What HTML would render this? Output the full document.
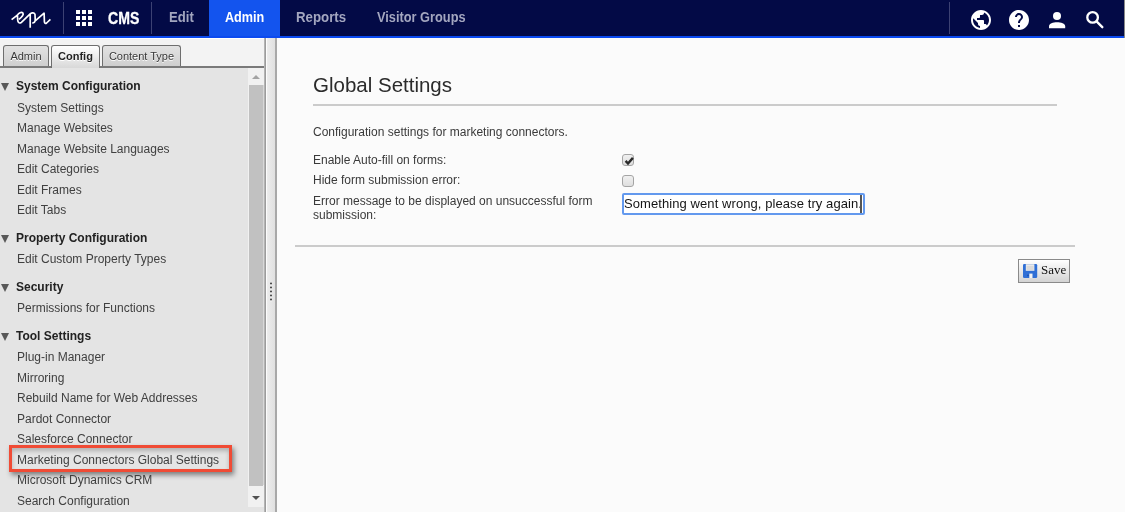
<!DOCTYPE html>
<html><head><meta charset="utf-8">
<style>
*{margin:0;padding:0;box-sizing:border-box}
html,body{width:1125px;height:512px;overflow:hidden;background:#fbfbfb;font-family:"Liberation Sans",sans-serif;position:relative}
.a{position:absolute;white-space:nowrap}
#hdr{position:absolute;left:0;top:0;width:1125px;height:36px;background:#030a46}
#hbar{position:absolute;left:0;top:36px;width:1125px;height:2px;background:#0b4af0}
.sep{position:absolute;top:2px;width:1px;height:32px;background:#3c4173}
.nav{position:absolute;top:0;height:36px;font-weight:bold;font-size:15.5px;line-height:34px;color:#a3a6bf}
.nav span{display:inline-block;transform:scaleX(.815);transform-origin:0 50%}
#admin{background:#1354ee;color:#fff}
#left{position:absolute;left:0;top:38px;width:265px;height:474px;background:#e4e4e4}
#strip{position:absolute;left:0;top:0;width:265px;height:30px;background:#f3f3f3;border-top:1px solid #fff;border-bottom:2px solid #7a7a7a}
.tab{position:absolute;top:6px;height:21px;border:1px solid #6e6e6e;border-bottom:none;border-radius:3px 3px 0 0;font-size:11px;line-height:20px;text-align:center;color:#383838;background:linear-gradient(#e2e2e2,#cfcfcf);text-shadow:0 1px 0 #fff}
.tab.on{background:linear-gradient(#fff,#d8d8d8);font-weight:bold;color:#222;height:23px}
.tree{position:absolute;left:0;font-size:12px;color:#404040;line-height:14px}
.h{font-weight:bold;color:#222;left:16px}
.i{left:17px}
.tri{position:absolute;left:1px;width:0;height:0;border-left:4.5px solid transparent;border-right:4.5px solid transparent;border-top:8px solid #585858}
#sb{position:absolute;left:248px;top:30px;width:16px;height:439px;background:#f1f1f1}
#thumb{position:absolute;left:1px;top:17px;width:14px;height:401px;background:#c1c1c1}
#split{position:absolute;left:265px;top:38px;width:12px;height:474px;background:linear-gradient(90deg,#9c9c9c 0,#9c9c9c 1px,#fcfcfc 1px,#fcfcfc 2px,#ececec 2px,#e0e0e0 10px,#a8a8a8 10px,#a8a8a8 12px)}
.dot{position:absolute;left:5px;width:2px;height:2px;background:#3c3c3c;border-radius:1px;box-shadow:0 1px 0 rgba(255,255,255,.8);transform:translateY(.5px)}
.ct{position:absolute;font-size:12px;color:#3a3a3a;line-height:14px}
</style></head><body><div style="position:absolute;left:0;top:0;width:1125px;height:512px;will-change:transform">
<div id="hdr">
  <svg class="a" style="left:8px;top:8px" width="48" height="24" viewBox="0 0 48 24">
    <path d="M3.6,11.7 L9.4,7.1 C10.8,4.9 13.4,3.7 14.9,5 C16.1,6.2 14,9 11,11.3 M9.4,7.1 C9.6,9.5 9.5,12 10,13.6 C10.5,15.2 12.2,15.4 13.4,14.3 L22.4,5.6 M22.2,5.8 L22.2,19.7 M22.4,5.6 C23.8,4.4 26.6,4.4 27,6.4 L27.2,11.2 C27.3,14 26.2,15 24.2,15 M26.6,13.4 L36.1,5.2 L36.4,13.8 C36.5,15.5 37.6,15.8 38.6,15 L42.4,11.4" fill="none" stroke="#fff" stroke-width="1.7" stroke-linecap="butt" stroke-linejoin="round"/>
  </svg>
  <div class="sep" style="left:63px"></div>
  <svg class="a" style="left:76px;top:10px" width="16" height="16" viewBox="0 0 16 16" fill="#fff">
    <rect x="0" y="0" width="4" height="4"/><rect x="6" y="0" width="4" height="4"/><rect x="12" y="0" width="4" height="4"/>
    <rect x="0" y="6" width="4" height="4"/><rect x="6" y="6" width="4" height="4"/><rect x="12" y="6" width="4" height="4"/>
    <rect x="0" y="12" width="4" height="4"/><rect x="6" y="12" width="4" height="4"/><rect x="12" y="12" width="4" height="4"/>
  </svg>
  <div class="nav" style="left:108px;top:2px;color:#fff;font-size:16px;-webkit-text-stroke:.3px #fff"><span style="transform:scaleX(.88)">CMS</span></div>
  <div class="sep" style="left:151px"></div>
  <div class="nav" style="left:152px;width:57px;padding-left:16.5px"><span style="transform:scaleX(.845)">Edit</span></div>
  <div class="nav" id="admin" style="left:209px;width:71px;padding-left:16px"><span>Admin</span></div>
  <div class="nav" style="left:280px;padding-left:16px"><span style="transform:scaleX(.855)">Reports</span></div>
  <div class="nav" style="left:361px;padding-left:16px"><span style="transform:scaleX(.825)">Visitor Groups</span></div>
  <div class="sep" style="left:949px"></div>
  <svg class="a" style="left:969px;top:8px" width="24" height="24" viewBox="0 0 24 24" fill="#fff"><path d="M12 2C6.48 2 2 6.48 2 12s4.48 10 10 10 10-4.48 10-10S17.52 2 12 2zm-1 17.930c-3.950-.49-7-3.850-7-7.930 0-.62.08-1.210.21-1.790L9 15v1c0 1.100.9 2 2 2v1.930zm6.900-2.540c-.26-.81-1-1.390-1.900-1.390h-1v-3c0-.55-.45-1-1-1H8v-2h2c.55 0 1-.45 1-1V7h2c1.100 0 2-.9 2-2v-.41c2.930 1.190 5 4.060 5 7.410 0 2.080-.8 3.970-2.100 5.390z"/></svg>
  <svg class="a" style="left:1007px;top:8px" width="24" height="24" viewBox="0 0 24 24" fill="#fff"><path d="M12 2C6.48 2 2 6.48 2 12s4.48 10 10 10 10-4.480 10-10S17.520 2 12 2zm1 17h-2v-2h2v2zm2.070-7.750l-.9.920C13.450 12.900 13 13.500 13 15h-2v-.5c0-1.100.45-2.100 1.170-2.830l1.240-1.260c.37-.36.59-.86.59-1.410 0-1.100-.9-2-2-2s-2 .9-2 2H8c0-2.210 1.790-4 4-4s4 1.790 4 4c0 .88-.36 1.680-.93 2.250z"/></svg>
  <svg class="a" style="left:1040px;top:0" width="80" height="36" viewBox="1040 0 80 36">
    <circle cx="1057" cy="16" r="4" fill="#fff"/>
    <path d="M1049,28.2 L1049,26.2 C1049,23.5 1053,22.3 1057,22.3 C1061,22.3 1065.2,23.5 1065.2,26.2 L1065.2,28.2 Z" fill="#fff"/>
    <circle cx="1092.6" cy="17.4" r="5.3" fill="none" stroke="#fff" stroke-width="2.3"/>
    <path d="M1096.8,21.7 L1102.3,27.2" stroke="#fff" stroke-width="2.4" stroke-linecap="round"/>
  </svg>
  </div>
<div id="hbar"></div>
<div class="a" style="left:1124px;top:0;width:1px;height:38px;background:#888"></div>

<div id="left">
  <div id="strip">
    <div class="tab" style="left:3px;width:46px">Admin</div>
    <div class="tab on" style="left:51px;width:49px">Config</div>
    <div class="tab" style="left:102px;width:79px">Content Type</div>
  </div>
  <div class="tri" style="top:45px"></div>
  <div class="tree h a" style="top:41px">System Configuration</div>
  <div class="tree i a" style="top:63px">System Settings</div>
  <div class="tree i a" style="top:83px">Manage Websites</div>
  <div class="tree i a" style="top:104px">Manage Website Languages</div>
  <div class="tree i a" style="top:124px">Edit Categories</div>
  <div class="tree i a" style="top:145px">Edit Frames</div>
  <div class="tree i a" style="top:165px">Edit Tabs</div>
  <div class="tri" style="top:197px"></div>
  <div class="tree h a" style="top:193px">Property Configuration</div>
  <div class="tree i a" style="top:214px">Edit Custom Property Types</div>
  <div class="tri" style="top:246px"></div>
  <div class="tree h a" style="top:242px">Security</div>
  <div class="tree i a" style="top:263px">Permissions for Functions</div>
  <div class="tri" style="top:295px"></div>
  <div class="tree h a" style="top:291px">Tool Settings</div>
  <div class="tree i a" style="top:312px">Plug-in Manager</div>
  <div class="tree i a" style="top:333px">Mirroring</div>
  <div class="tree i a" style="top:353px">Rebuild Name for Web Addresses</div>
  <div class="tree i a" style="top:374px">Pardot Connector</div>
  <div class="tree i a" style="top:394px">Salesforce Connector</div>
  <div class="a" style="left:9px;top:407px;width:223px;height:27px;border:3px solid #f04b35;box-shadow:2px 3px 5px rgba(0,0,0,.45),inset 0 3px 4px rgba(0,0,0,.22)"></div>
  <div class="tree i a" style="top:415px">Marketing Connectors Global Settings</div>
  <div class="tree i a" style="top:435px">Microsoft Dynamics CRM</div>
  <div class="tree i a" style="top:456px">Search Configuration</div>
  <div id="sb">
    <div class="a" style="left:4px;top:7px;width:0;height:0;border-left:4px solid transparent;border-right:4px solid transparent;border-bottom:4px solid #a3a3a3"></div>
    <div id="thumb"></div>
    <div class="a" style="left:4px;top:428px;width:0;height:0;border-left:4px solid transparent;border-right:4px solid transparent;border-top:4px solid #505050"></div>
  </div>
  <div class="a" style="left:263px;top:47px;width:1px;height:400px;background:#d8d8d8"></div>
  <div class="a" style="left:264px;top:0;width:1px;height:474px;background:#b4b4b4"></div>
</div>
<div id="split">
  <div class="dot" style="top:244px"></div>
  <div class="dot" style="top:248px"></div>
  <div class="dot" style="top:252px"></div>
  <div class="dot" style="top:256px"></div>
  <div class="dot" style="top:260px"></div>
</div>

<div class="a" style="left:313px;top:73px;font-size:20.5px;color:#2b2b2b;line-height:24px">Global Settings</div>
<div class="a" style="left:313px;top:104px;width:744px;height:2px;background:#cbcbcb"></div>
<div class="ct a" style="left:313px;top:125px">Configuration settings for marketing connectors.</div>
<div class="ct a" style="left:313px;top:153px">Enable Auto-fill on forms:</div>
<div class="ct a" style="left:313px;top:173px">Hide form submission error:</div>
<div class="ct a" style="left:313px;top:194px">Error message to be displayed on unsuccessful form<br>submission:</div>
<div class="a" style="left:622px;top:154px;width:12px;height:12px;border:1px solid #a4a4a4;border-radius:3px;background:linear-gradient(#f0f0f0,#dedede)">
  <svg class="a" style="left:1px;top:1px" width="10" height="10" viewBox="0 0 10 10"><path d="M1.6,4.9 L4,7.5 L8.9,1.9" fill="none" stroke="#2a2a2a" stroke-width="2.4"/></svg>
</div>
<div class="a" style="left:622px;top:175px;width:12px;height:12px;border:1px solid #a4a4a4;border-radius:3px;background:linear-gradient(#f0f0f0,#dedede)"></div>
<div class="a" style="left:622px;top:193px;width:243px;height:22px;border:2px solid #6399ee;border-radius:2px;background:#fff"></div>
<div class="a" style="left:624px;top:196px;font-size:13px;line-height:16px;color:#151515;letter-spacing:.08px">Something went wrong, please try again.</div>
<div class="a" style="left:860px;top:195px;width:2px;height:18px;background:#555"></div>
<div class="a" style="left:295px;top:245px;width:780px;height:2px;background:#cbcbcb"></div>
<div class="a" style="left:1018px;top:259px;width:52px;height:24px;border:1px solid #8a8a8a;background:linear-gradient(#fff,#d3d3d3)">
  <svg class="a" style="left:4px;top:4px" width="15" height="15" viewBox="0 0 15 15">
    <path d="M1.3,0 H12.9 Q14.2,0 14.2,1.3 V12.7 Q14.2,14 12.9,14 H1.3 Q0,14 0,12.7 V1.3 Q0,0 1.3,0Z" fill="#2f6fd6"/>
    <rect x="2.8" y="0.2" width="8.6" height="6.6" fill="#e9e9e9"/>
    <rect x="3.6" y="2.6" width="7" height="0.8" fill="#c4c4c4"/>
    <rect x="3.6" y="4.6" width="7" height="0.8" fill="#c4c4c4"/>
    <rect x="6.3" y="9.6" width="3.2" height="4.4" fill="#f2f2f2"/>
    <circle cx="5" cy="11.4" r="0.9" fill="#1a4fb0"/>
  </svg>
  <div class="a" style="left:22px;top:3px;font-family:'Liberation Serif',serif;font-size:13px;line-height:14px;color:#111">Save</div>
</div>
</div></body></html>
